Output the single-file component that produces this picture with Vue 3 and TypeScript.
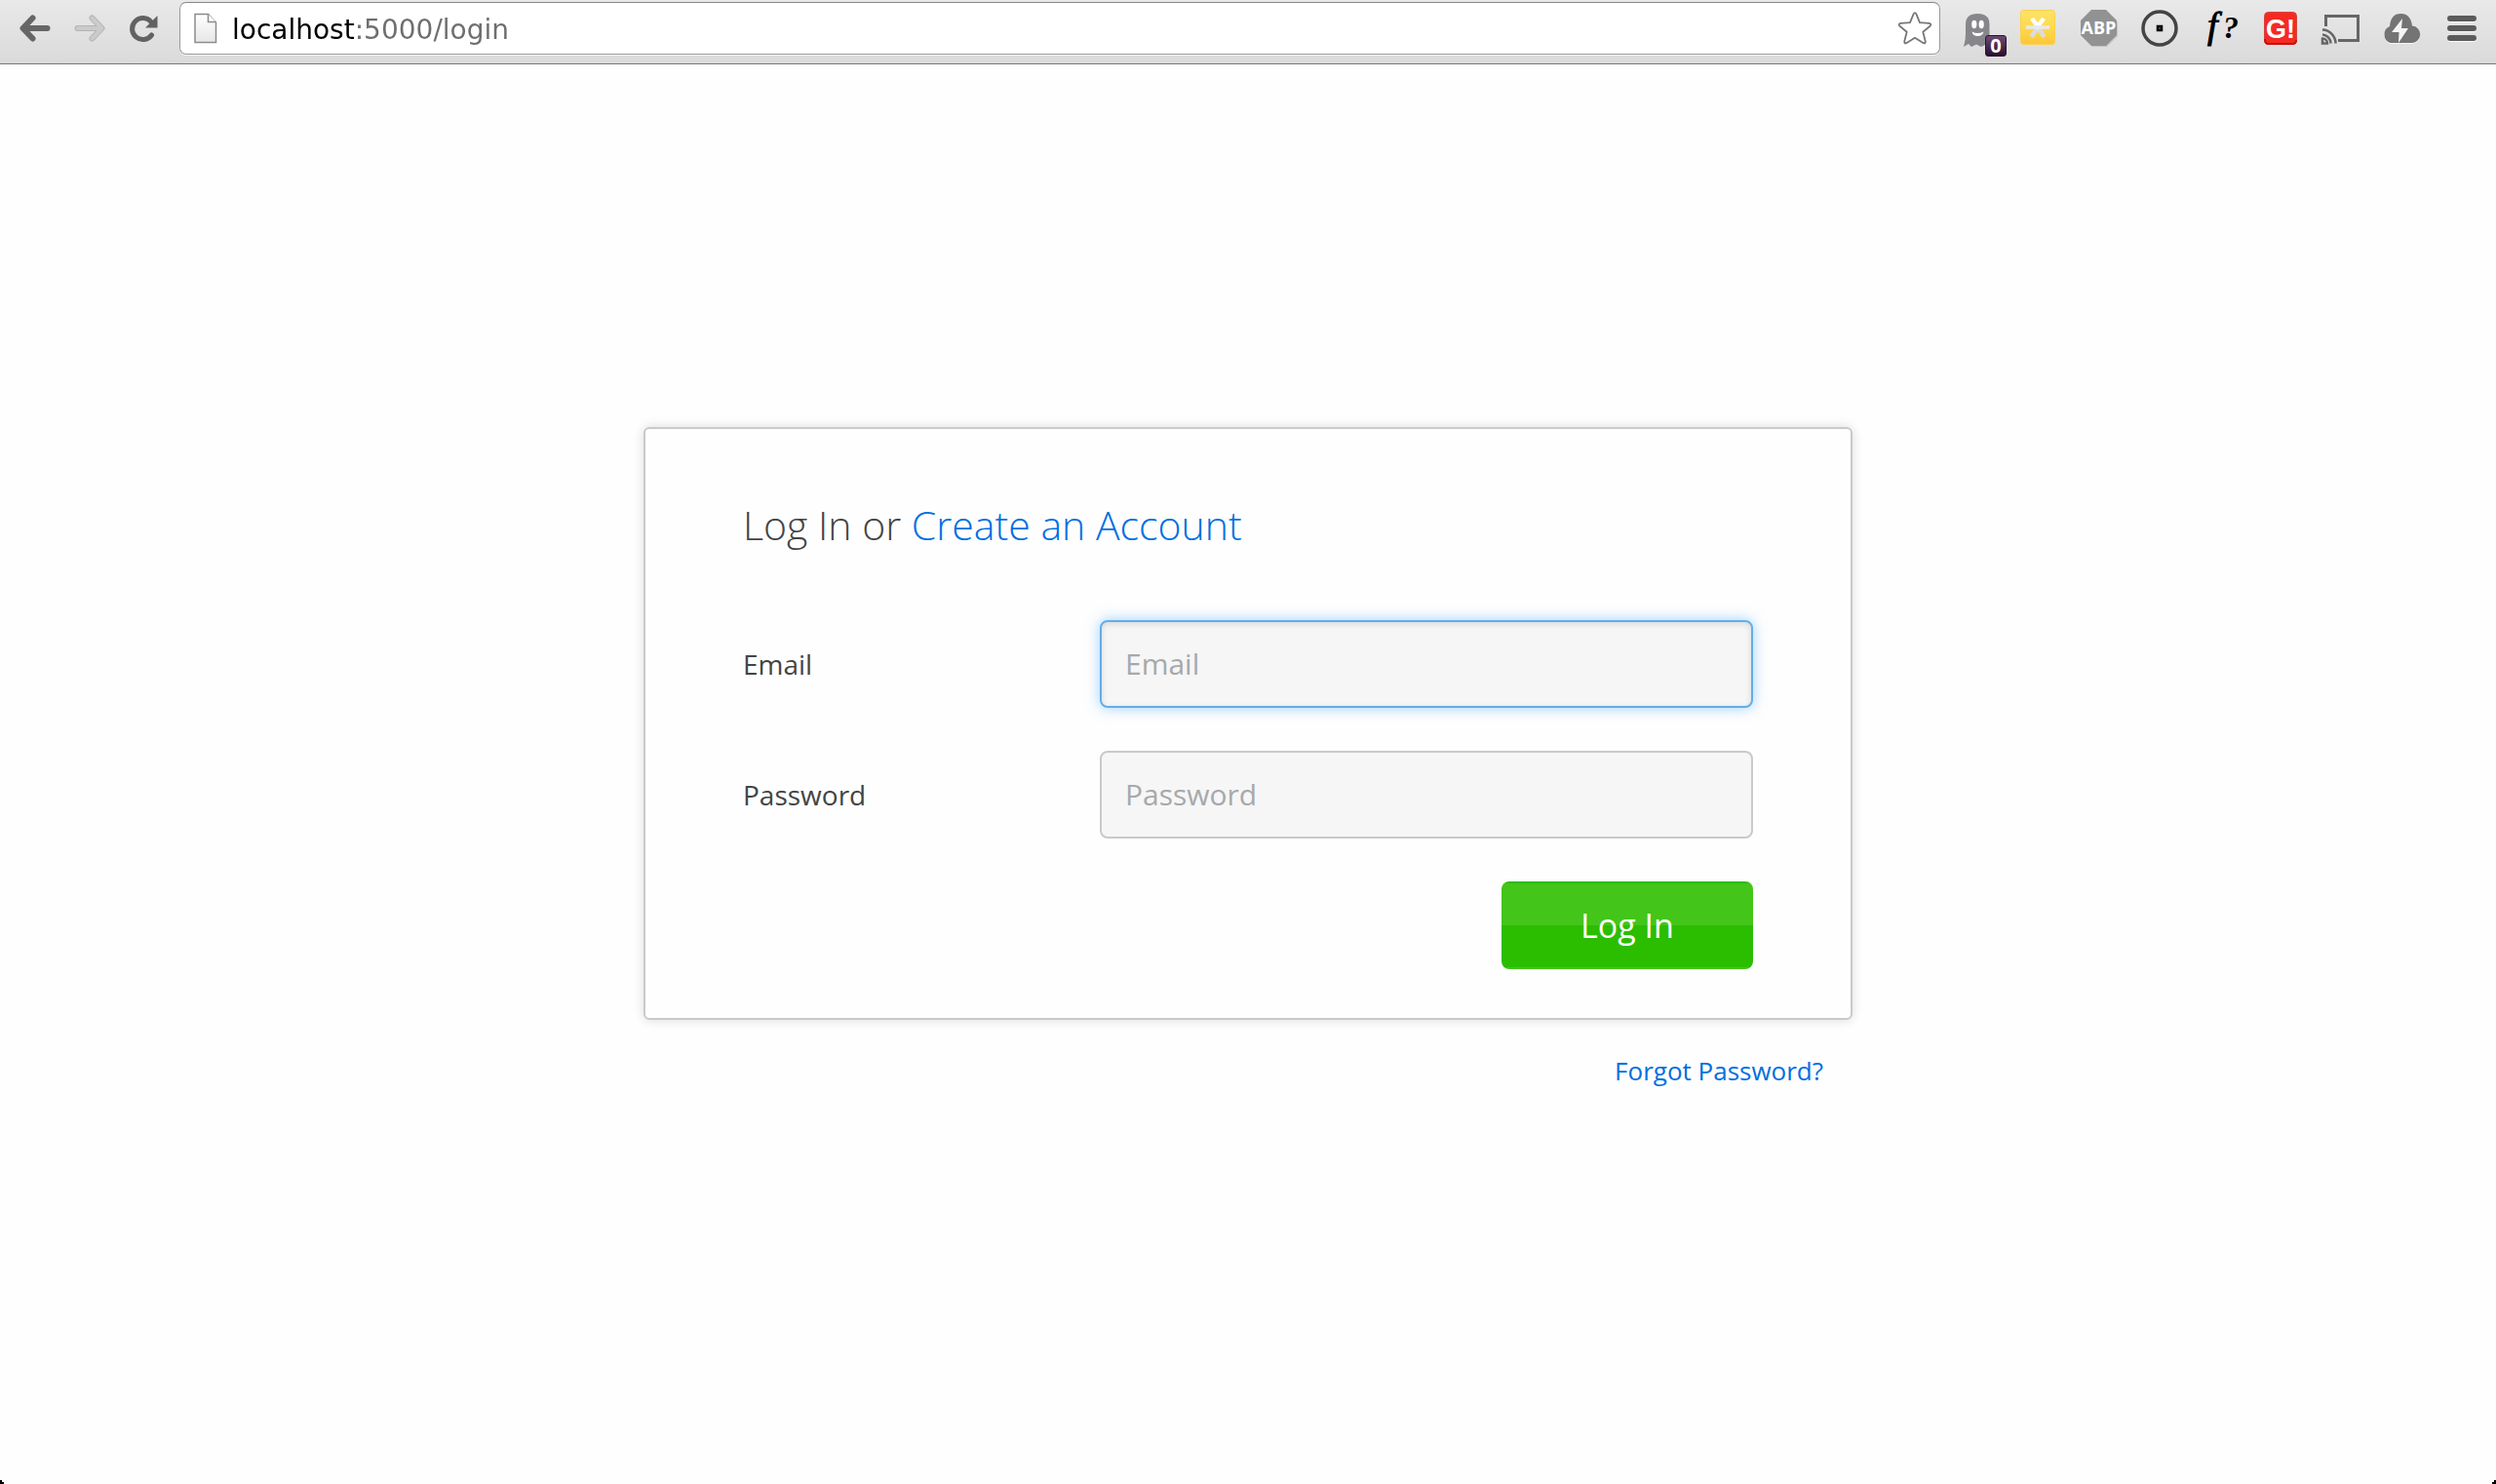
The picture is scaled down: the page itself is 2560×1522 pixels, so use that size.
<script setup lang="ts">
import { ref } from 'vue'

const address = ref('localhost:5000/login')
const email = ref('')
const password = ref('')
</script>

<template>
  <div class="page">
    <header class="toolbar">
      <nav class="nav">
        <button type="button" class="tool" aria-label="Back">
          <svg width="32" height="30" viewBox="0 0 32 30">
            <path d="M13.500 4.500L3.500 15L13.500 25.500M4.500 15H28.500" class="arrow" />
          </svg>
        </button>
        <button type="button" class="tool" aria-label="Forward" disabled>
          <svg width="32" height="30" viewBox="0 0 32 30">
            <path d="M18.500 4.500L28.500 15L18.500 25.500M27.500 15H3.500" class="arrow edge" />
            <path d="M18.500 4.500L28.500 15L18.500 25.500M27.500 15H3.500" class="arrow pale" />
          </svg>
        </button>
        <button type="button" class="tool" aria-label="Reload">
          <svg width="32" height="30" viewBox="0 0 32 30">
            <path d="M23 8.500A11 11 0 1 0 23.500 22" fill="none" stroke="#626262" stroke-width="5" stroke-linecap="round" />
            <path d="M29.500 2V14.500H17Z" fill="#626262" />
          </svg>
        </button>
      </nav>

      <form class="omnibox" @submit.prevent>
        <svg width="24" height="34" viewBox="0 0 24 34" aria-hidden="true">
          <defs>
            <linearGradient id="sheet" x1="0" y1="0" x2="0" y2="1">
              <stop offset="0" stop-color="#fff" />
              <stop offset="1" stop-color="#e6e6e6" />
            </linearGradient>
          </defs>
          <path d="M1 2.500H14.500L22.500 11V31.500H1Z" fill="url(#sheet)" stroke="#8c8c8c" stroke-width="1.500" />
          <path d="M14.500 2.500V10.500H22.500" fill="#fff" stroke="#8c8c8c" stroke-width="1.500" />
        </svg>
        <input v-model="address" class="address" type="text" aria-label="Address" spellcheck="false" />
        <button type="button" class="star" aria-label="Bookmark this page">
          <svg width="38" height="38" viewBox="0 0 38 38">
            <path d="M17.500 4.600Q19 1.800 20.500 4.600L24 13.200L33.600 13.900Q36.600 14.600 34.500 16.800L27.300 22.800L29.700 32.200Q30.200 35.300 27.400 33.900L19 28.800L10.600 33.900Q7.800 35.300 8.300 32.200L10.700 22.800L3.500 16.800Q1.400 14.600 4.400 13.900L14 13.200Z" fill="#fff" stroke="#777" stroke-width="1.800" stroke-linejoin="round" />
          </svg>
        </button>
      </form>

      <div class="extensions">
        <button type="button" class="tool ghost" aria-label="Ghostery">
          <svg width="38" height="38" viewBox="0 0 38 38">
            <path d="M6 15Q6 4 18.500 4Q30.500 4 30.500 15V37L26 36L22 38L17 35.500L12 38L9 35L4 38Q6 31 6 25Z" fill="#87878b" />
            <ellipse cx="14.800" cy="15" rx="2.600" ry="4.200" fill="#fff" />
            <ellipse cx="22.200" cy="15" rx="2.600" ry="4.200" fill="#fff" />
            <path d="M12.500 22.500Q18.500 25.500 24.500 22.500Q23.500 27 18.500 27Q13.500 27 12.500 22.500Z" fill="#fff" />
          </svg>
          <span class="badge">0</span>
        </button>
        <button type="button" class="tool" aria-label="Asterisk">
          <svg width="38" height="38" viewBox="0 0 38 38">
            <defs>
              <linearGradient id="gold" x1="0" y1="0" x2="0" y2="1">
                <stop offset="0" stop-color="#fbe46a" />
                <stop offset="0.500" stop-color="#fddb4c" />
                <stop offset="1" stop-color="#fdc63a" />
              </linearGradient>
            </defs>
            <rect x="0.500" y="0.500" width="35" height="35" rx="3" fill="url(#gold)" stroke="#fcd04e" />
            <path d="M19 19L24.500 28M17 19L11.500 28" stroke="#dcdce0" stroke-width="4.500" />
            <path d="M12 9L18 17L24 9" fill="none" stroke="#fff" stroke-width="4.500" />
            <path d="M6 18H30" stroke="#e8e8ea" stroke-width="3.500" />
          </svg>
        </button>
        <button type="button" class="tool" aria-label="Adblock Plus">
          <svg width="38" height="38" viewBox="0 0 38 38">
            <path d="M12 2H27L38 13V27L27 38H12L1 27V13Z" fill="#c4c4c4" />
            <path d="M11 0H26L37 11V26L26 37H11L0 26V11Z" fill="#929292" />
            <text x="18.500" y="25" text-anchor="middle" class="abp">ABP</text>
          </svg>
        </button>
        <button type="button" class="tool" aria-label="Target">
          <svg width="38" height="38" viewBox="0 0 38 38">
            <circle cx="19" cy="19" r="17" fill="none" stroke="#444" stroke-width="3.500" />
            <rect x="17" y="17" width="4" height="4" fill="#777" stroke="#000" stroke-width="2.500" />
          </svg>
        </button>
        <button type="button" class="tool" aria-label="WhatFont">
          <svg width="38" height="38" viewBox="0 0 38 38">
            <text x="6" y="29" class="font-f">f</text>
            <text x="22" y="29" class="font-q">?</text>
          </svg>
        </button>
        <button type="button" class="tool" aria-label="G!">
          <svg width="38" height="38" viewBox="0 0 38 38">
            <rect x="2.500" y="2.500" width="33" height="33" rx="4" fill="#f52a22" stroke="#d8443c" />
            <path d="M3 30Q3 35 7 35H31Q35 35 35 31" fill="none" stroke="#c31410" stroke-width="2" />
            <text x="19" y="29" text-anchor="middle" class="gee">G!</text>
          </svg>
        </button>
        <button type="button" class="tool" aria-label="Cast">
          <svg width="38" height="38" viewBox="0 0 38 38">
            <path d="M3.500 17V6.500H36.500V31.500H16" fill="none" stroke="#666" stroke-width="3" />
            <path d="M0 29.500A5 5 0 0 1 5 34.500H0ZM0 25.500A9 9 0 0 1 8.500 34.500M0 20.500A14 14 0 0 1 13.500 34.500" fill="none" stroke="#666" stroke-width="2.500" />
          </svg>
        </button>
        <button type="button" class="tool" aria-label="Cloud">
          <svg width="38" height="38" viewBox="1 0 38 38">
            <path d="M8.500 35A8.500 9 0 0 1 8 18Q9 5 19.500 5Q29.500 5 31 17.500A8.700 8.700 0 0 1 30 35Z" fill="#f6f6f6" />
            <path d="M8.500 34A8.500 9 0 0 1 8 17Q9 4 19.500 4Q29.500 4 31 16.500A8.700 8.700 0 0 1 30 34Z" fill="#747474" />
            <path d="M21 9L10 23H17.500L17 34L27 19H20Z" fill="#f4f4f4" />
          </svg>
        </button>
        <button type="button" class="tool" aria-label="Menu">
          <svg width="38" height="38" viewBox="0 0 38 38">
            <path d="M7 10H31M7 20H31M7 30H31" stroke="#fafafa" stroke-width="6" stroke-linecap="round" />
            <path d="M7 9H31M7 19H31M7 29H31" stroke="#5b5b5b" stroke-width="6" stroke-linecap="round" />
          </svg>
        </button>
      </div>
    </header>

    <main class="content">
      <section class="login">
        <form class="card" @submit.prevent>
          <h1 class="title">Log In or <a href="#create">Create an Account</a></h1>
          <div class="field">
            <label for="email">Email</label>
            <input id="email" v-model="email" class="active" type="email" placeholder="Email" />
          </div>
          <div class="field">
            <label for="password">Password</label>
            <input id="password" v-model="password" type="password" placeholder="Password" />
          </div>
          <button type="submit" class="submit">Log In</button>
        </form>
        <p class="forgot"><a href="#forgot">Forgot Password?</a></p>
      </section>
    </main>

    <i class="corner left"></i>
    <i class="corner right"></i>
  </div>
</template>

<style>
body {
  background: #fefefe;
}
</style>

<style scoped>
.page,
.page * {
  box-sizing: border-box;
}

.page {
  position: relative;
  display: flex;
  flex-direction: column;
  min-height: 100vh;
  font-family: "Open Sans", "Noto Sans", sans-serif;
  color: #444;
}

button {
  padding: 0;
  border: 0;
  background: none;
}

svg {
  display: block;
  overflow: visible;
}

a {
  color: #006fe0;
  text-decoration: none;
}

.toolbar {
  display: flex;
  align-items: flex-start;
  height: 66px;
  padding: 2px 16px 0 20px;
  border-bottom: 1px solid #777;
  background: linear-gradient(#e9e9e9, #dadada);
}

.nav {
  display: flex;
  gap: 24px;
  padding-top: 12px;
}

.arrow {
  fill: none;
  stroke: #666;
  stroke-width: 6;
  stroke-linecap: round;
  stroke-linejoin: round;
}

.arrow.edge {
  stroke: #b4b4b4;
}

.arrow.pale {
  stroke: #cbcbcb;
  stroke-width: 4;
}

.omnibox {
  display: flex;
  flex: 1;
  align-items: center;
  height: 54px;
  margin: 0 20px 0 20px;
  padding: 0 6px 0 14px;
  border: 1px solid #999;
  border-top-color: #888;
  border-radius: 7px;
  background: #fff;
  box-shadow: 0 1px 0 #f4f4f4;
}

.address {
  flex: 1;
  min-width: 0;
  height: 52px;
  padding: 2px 0 0 15px;
  border: 0;
  outline: 0;
  background: linear-gradient(90deg, #000 141px, #6e6e6e 141px);
  background-clip: text;
  -webkit-background-clip: text;
  color: transparent;
  font: 28px/50px "DejaVu Sans", sans-serif;
}

.extensions {
  display: flex;
  gap: 24px;
  padding-top: 8px;
}

.ghost {
  position: relative;
}

.badge {
  position: absolute;
  top: 26px;
  left: 26px;
  width: 22px;
  height: 22px;
  border: 1px solid #2a1030;
  border-radius: 3px;
  background: linear-gradient(#6b4a72, #2a0f30);
  color: #fff;
  font: bold 20px/20px "Open Sans", sans-serif;
  text-align: center;
}

.abp {
  fill: #fff;
  font: bold 18px "Open Sans", sans-serif;
}

.font-f {
  stroke: #000;
  font: italic 38px "Liberation Serif", serif;
}

.font-q {
  font: italic bold 32px "Liberation Serif", serif;
}

.gee {
  fill: #fff;
  font: bold 27px "Liberation Sans", sans-serif;
}

.content {
  display: flex;
  flex: 1;
  align-items: center;
  justify-content: center;
}

.login {
  flex: 0 1 1240px;
}

.card {
  display: flex;
  flex-direction: column;
  gap: 44px;
  padding: 70px 100px 50px;
  border: 2px solid #c9c9c9;
  border-radius: 6px;
  background: #fefefe;
  box-shadow: 0 0 12px rgba(0, 0, 0, 0.14);
}

.title {
  margin: 0 0 26px;
  font-size: 41px;
  font-weight: 300;
  line-height: 56px;
}

.field {
  display: flex;
  align-items: center;
}

.field label {
  flex: 0 0 366px;
  font-size: 28px;
}

.field input {
  flex: 1;
  min-width: 0;
  height: 90px;
  padding: 0 24px 2px;
  border: 2px solid #c9c9c9;
  border-radius: 8px;
  outline: 0;
  background: #f6f6f6;
  color: #444;
  font: 30px "Open Sans", sans-serif;
}

.field input::placeholder {
  color: #a6a9ac;
}

.field input.active {
  border-color: #62aeea;
  box-shadow: 0 0 14px rgba(60, 165, 255, 0.5), inset 0 2px 6px rgba(0, 0, 0, 0.12);
}

.submit {
  align-self: flex-end;
  width: 258px;
  height: 90px;
  border-radius: 8px;
  background: linear-gradient(#2bbd00 2px, #43c51a 2px, #43c51a 50%, #2bbd00 50%, #2bbd00 88px, #43c51a 88px);
  color: #fff;
  font: 34px "Open Sans", sans-serif;
}

.forgot {
  margin: 0;
  padding: 0 30px;
  font-size: 26px;
  line-height: 104px;
  text-align: right;
}

.corner {
  position: absolute;
  bottom: 0;
  width: 4px;
  height: 4px;
}

.corner.left {
  left: 0;
  background: linear-gradient(#000, #000) 0 0 / 2px 4px no-repeat, linear-gradient(#000, #000) 0 2px / 4px 2px no-repeat;
}

.corner.right {
  right: 0;
  background: linear-gradient(#000, #000) 2px 0 / 2px 4px no-repeat, linear-gradient(#000, #000) 0 2px / 4px 2px no-repeat;
}
</style>
